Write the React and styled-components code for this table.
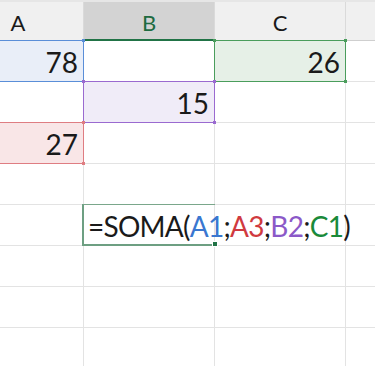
import React from 'react'
import styled, { createGlobalStyle } from 'styled-components'

const GlobalStyle = createGlobalStyle`
	html, body {
		margin: 0;
		padding: 0;
		background: #ffffff;
	}
	body {
		font-family: Lato, 'Liberation Sans', sans-serif;
		color: #1a1a1a;
	}
`

// colours of the range references inside the formula
const tones = {
	blue: { fill: '#e9eef8', line: '#5a8ed8', text: '#3a77d0' },
	red: { fill: '#f9e6e7', line: '#df7d82', text: '#d03a40' },
	purple: { fill: '#f0ecf8', line: '#9a6ad0', text: '#8b59c8' },
	green: { fill: '#e6f0e7', line: '#4a9d5c', text: '#1a8a3a' }
}

const Sheet = styled.div`
	width: 375px;
	height: 366px;
	overflow: hidden;
	background: #ffffff;
	border-top: 2px solid #e6e6e6;
	box-sizing: border-box;
`

const Grid = styled.div`
	display: grid;
	grid-template-columns: repeat(4, 131px);
	grid-template-rows: 39px;
	grid-auto-rows: 41px;
	width: 524px;
	margin-left: -47px;
`

const HeaderCell = styled.div`
	box-sizing: border-box;
	display: flex;
	align-items: center;
	justify-content: center;
	padding-top: 3px;
	font-size: 22px;
	background: ${props => (props.selected ? '#d3d3d3' : '#f0f0f0')};
	color: ${props => (props.selected ? '#1e6b41' : '#1a1a1a')};
	border-right: 1px solid #dadada;
	border-bottom: ${props =>
		props.selected ? '2px solid #217346' : '1px solid #cfcfcf'};
`

const Cell = styled.div`
	position: relative;
	box-sizing: border-box;
	display: flex;
	align-items: flex-end;
	justify-content: flex-end;
	padding: 0 5px 5px 0;
	font-size: 28px;
	line-height: 1;
	white-space: nowrap;
	background: ${props => (props.tone ? tones[props.tone].fill : 'transparent')};
	border-right: 1px solid #e3e3e3;
	border-bottom: 1px solid #e3e3e3;
`

// coloured frame drawn over the grid lines of a referenced cell
const RefFrame = styled.div`
	position: absolute;
	top: -1px;
	left: -1px;
	right: -1px;
	bottom: -1px;
	border: 1px solid ${props => tones[props.tone].line};
	pointer-events: none;
	z-index: 2;
`

const Corner = styled.span`
	position: absolute;
	width: 3px;
	height: 3px;
	background: ${props => tones[props.tone].line};
	${props => (props.top ? 'top: -2px;' : 'bottom: -2px;')}
	${props => (props.left ? 'left: -2px;' : 'right: -2px;')}
`

const EditCell = styled(Cell)`
	justify-content: flex-start;
	padding: 0 0 5px 4px;
	letter-spacing: -0.75px;
	z-index: 3;
`

const EditFrame = styled.div`
	position: absolute;
	top: -1px;
	left: -2px;
	right: -1px;
	bottom: -1px;
	border-top: 1px solid #7aa78b;
	border-left: 2px solid #6d9f82;
	border-bottom: 2px solid #6d9f82;
	pointer-events: none;
`

const FillHandle = styled.span`
	position: absolute;
	right: -3px;
	bottom: -3px;
	width: 4px;
	height: 4px;
	background: #217346;
	border: 1px solid #ffffff;
`

const Ref = styled.span`
	color: ${props => tones[props.tone].text};
`

const RefCell = ({ tone, children }) => (
	<Cell tone={tone}>
		{children}
		<RefFrame tone={tone}>
			<Corner tone={tone} top left />
			<Corner tone={tone} top />
			<Corner tone={tone} left />
			<Corner tone={tone} />
		</RefFrame>
	</Cell>
)

// column D sits past the right edge, so only its header strip shows
const columns = ['A', 'B', 'C', '']

const App = () => {
	return (
		<>
			<GlobalStyle />
			<Sheet>
				<Grid>
					{columns.map((col, i) => (
						<HeaderCell key={i} selected={col === 'B'}>
							{col}
						</HeaderCell>
					))}

					<RefCell tone="blue">78</RefCell>
					<Cell />
					<RefCell tone="green">26</RefCell>
					<Cell />

					<Cell />
					<RefCell tone="purple">15</RefCell>
					<Cell />
					<Cell />

					<RefCell tone="red">27</RefCell>
					<Cell />
					<Cell />
					<Cell />

					<Cell />
					<Cell />
					<Cell />
					<Cell />

					<Cell />
					<EditCell>
						=SOMA(<Ref tone="blue">A1</Ref>;<Ref tone="red">A3</Ref>;
						<Ref tone="purple">B2</Ref>;<Ref tone="green">C1</Ref>)
						<EditFrame>
							<FillHandle />
						</EditFrame>
					</EditCell>
					<Cell />
					<Cell />

					{Array.from({ length: 12 }, (_, i) => (
						<Cell key={i} />
					))}
				</Grid>
			</Sheet>
		</>
	)
}

export default App
